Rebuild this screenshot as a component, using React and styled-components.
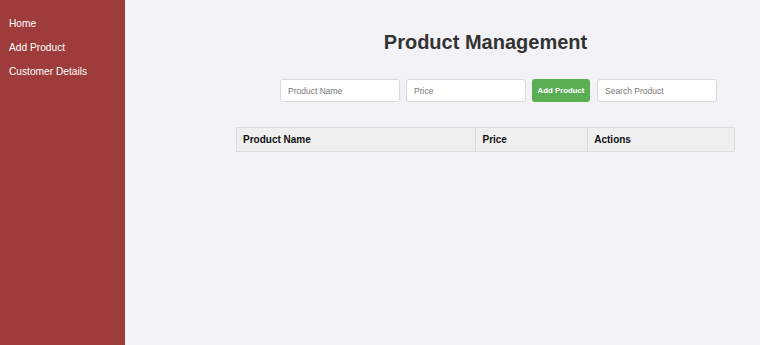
import React from "react";
import styled, { createGlobalStyle } from "styled-components";

const Global = createGlobalStyle`
  html, body { margin: 0; padding: 0; }
  body { font-family: "Liberation Sans", Arial, sans-serif; background: #f3f3f7; }
  * { box-sizing: border-box; }
`;

const Layout = styled.div`
  display: flex;
  width: 760px;
  height: 345px;
  overflow: hidden;
`;

const Sidebar = styled.nav`
  width: 125px;
  flex: none;
  background: #9e3b3b;
  padding: 18px 0 0 9px;
  display: flex;
  flex-direction: column;
  gap: 12px;
`;

const NavLink = styled.a`
  color: #fff;
  font-size: 10.2px;
  line-height: 12px;
  text-decoration: none;
`;

const Main = styled.main`
  flex: 1;
  background: #f3f3f7;
  padding: 31px 25px 0 111px;
  display: flex;
  flex-direction: column;
`;

const Title = styled.h1`
  margin: 0;
  font-size: 20px;
  line-height: 23px;
  font-weight: bold;
  color: #333;
  text-align: center;
`;

const Form = styled.div`
  display: flex;
  gap: 6px;
  margin: 25px 0 0 44px;
  align-items: center;
`;

const Input = styled.input`
  width: 120px;
  height: 23px;
  border: 1px solid #d9d9d9;
  border-radius: 3px;
  background: #fff;
  padding: 0 7px;
  font-family: "Liberation Sans", Arial, sans-serif;
  font-size: 8.5px;
  color: #333;
  outline: none;
  &::placeholder { color: #777; }
`;

const Button = styled.button`
  width: 58px;
  height: 23px;
  border: none;
  border-radius: 3px;
  background: #5cae54;
  color: #fff;
  font-family: "Liberation Sans", Arial, sans-serif;
  font-size: 7.8px;
  font-weight: bold;
  padding: 0;
  margin-right: 1px;
`;

const Table = styled.table`
  margin-top: 25px;
  width: 499px;
  border-collapse: collapse;
`;

const Th = styled.th`
  width: ${(p) => p.$w}px;
  height: 24px;
  background: #efefef;
  border: 1px solid #dcdcdc;
  text-align: left;
  padding: 0 6px;
  font-size: 10px;
  font-weight: bold;
  color: #111;
`;

export default function App() {
  return (
    <>
      <Global />
      <Layout>
        <Sidebar>
          <NavLink href="#">Home</NavLink>
          <NavLink href="#">Add Product</NavLink>
          <NavLink href="#">Customer Details</NavLink>
        </Sidebar>
        <Main>
          <Title>Product Management</Title>
          <Form>
            <Input placeholder="Product Name" />
            <Input placeholder="Price" />
            <Button>Add Product</Button>
            <Input placeholder="Search Product" />
          </Form>
          <Table>
            <thead>
              <tr>
                <Th $w={240}>Product Name</Th>
                <Th $w={112}>Price</Th>
                <Th $w={147}>Actions</Th>
              </tr>
            </thead>
          </Table>
        </Main>
      </Layout>
    </>
  );
}
